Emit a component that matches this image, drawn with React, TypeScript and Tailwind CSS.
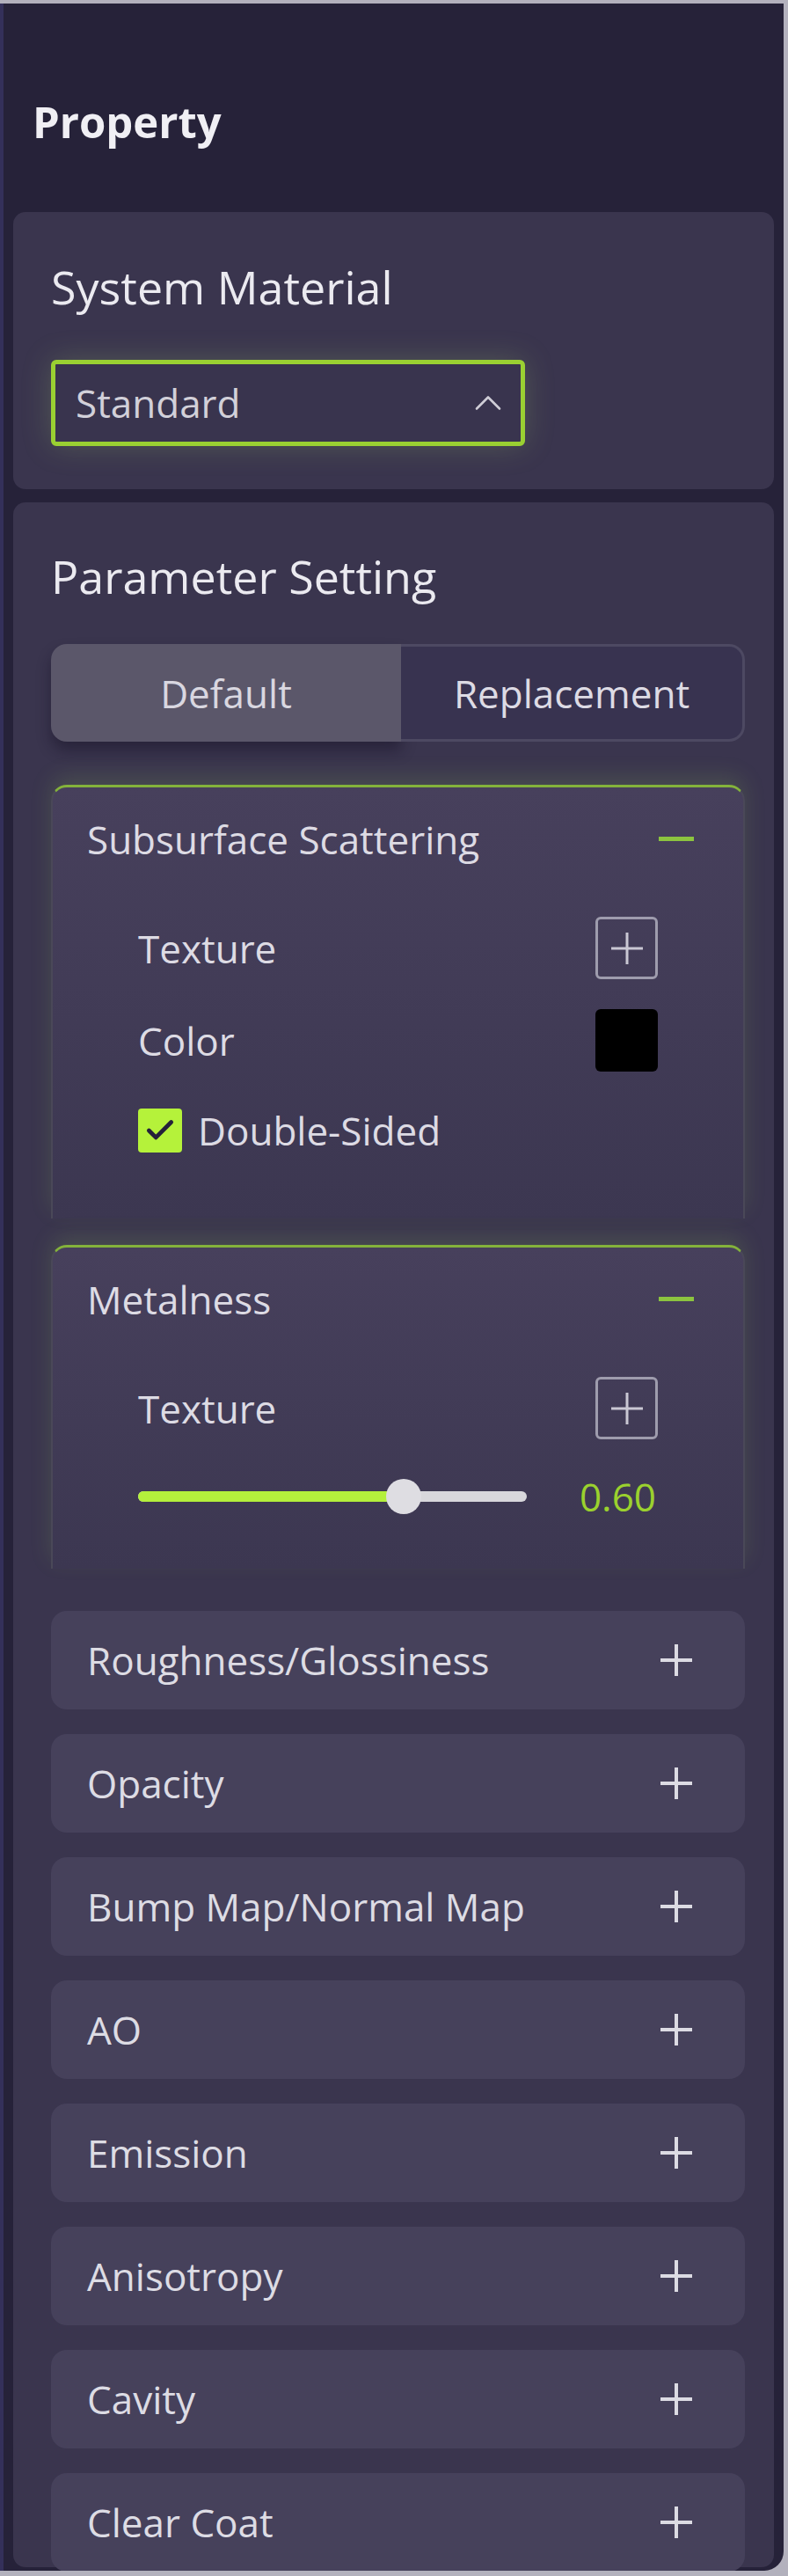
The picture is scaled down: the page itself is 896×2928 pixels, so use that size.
import { ChevronUp } from 'lucide-react';

const collapsed = [
  'Roughness/Glossiness',
  'Opacity',
  'Bump Map/Normal Map',
  'AO',
  'Emission',
  'Anisotropy',
  'Cavity',
  'Clear Coat',
];

function PlusLines({ className = '' }: { className?: string }) {
  return (
    <svg viewBox="0 0 40 40" className={className} fill="none" stroke="currentColor" strokeWidth={4}>
      <path d="M20 2v36M2 20h36" />
    </svg>
  );
}

function TextureButton() {
  return (
    <div className="w-[71px] h-[71px] rounded-[6px] border-[3px] border-[#9e9cad] flex items-center justify-center text-[#c9c7d3]">
      <svg viewBox="0 0 40 40" className="w-[40px] h-[40px]" fill="none" stroke="currentColor" strokeWidth={3}>
        <path d="M20 2v36M2 20h36" />
      </svg>
    </div>
  );
}

function Minus() {
  return <div className="w-[40px] h-[5px] bg-[#8cc43f]" />;
}

function OpenPanel({ title, children, className = '' }: { title: string; children: React.ReactNode; className?: string }) {
  return (
    <div className={`rounded-t-[18px] border-t-[3px] border-x-2 border-t-[#84b33b] border-x-[#4a4858] bg-gradient-to-b from-[#47405c] to-[#3c3751] shadow-[0_-10px_24px_rgba(150,200,90,0.16)] ${className}`}>
      <div className="h-[117px] flex items-center justify-between pl-[39px] pr-[56px]">
        <span className="text-[44px] text-[#dddbe4]">{title}</span>
        <Minus />
      </div>
      {children}
    </div>
  );
}

export default function App() {
  return (
    <div className="min-h-screen bg-[#b3b1bd] pt-[4px] font-['Open_Sans',sans-serif]">
      <div className="w-[891px] h-[2918px] bg-[#262239] rounded-br-[22px] border-l-[4px] border-[#34305a] overflow-hidden px-[11px]">
        <div className="pt-[106px] h-[237px]">
          <h1 className="text-[49px] leading-[56px] font-bold text-[#f0eff4] pl-[22px]">Property</h1>
        </div>

        {/* System material */}
        <section className="h-[315px] rounded-[14px] bg-[#3a354e] pl-[43px] pt-[55px]">
          <h2 className="text-[52px] leading-[60px] text-[#ebeaf0]">System Material</h2>
          <div className="mt-[53px] w-[539px] h-[98px] rounded-[6px] border-[5px] border-[#9ad032] bg-[#39344e] shadow-[0_0_34px_rgba(170,210,110,0.22)] flex items-center justify-between pl-[23px] pr-[11px]">
            <span className="text-[44px] text-[#d2d0d9]">Standard</span>
            <ChevronUp className="w-[52px] h-[52px] text-[#cfcdd6]" strokeWidth={1.2} />
          </div>
        </section>

        {/* Parameter setting */}
        <section className="mt-[15px] h-[2347px] rounded-[14px] bg-[#3a354e] pl-[43px] pr-[33px] pt-[54px]">
          <h2 className="text-[52px] leading-[60px] text-[#ebeaf0]">Parameter Setting</h2>

          <div className="mt-[47px] flex h-[111px]">
            <div className="w-[398px] rounded-l-[18px] bg-[#5b576a] shadow-[0_10px_16px_rgba(20,16,35,0.45)] flex items-center justify-center">
              <span className="text-[44px] text-[#d9d7e0]">Default</span>
            </div>
            <div className="flex-1 rounded-r-[18px] border-[3px] border-l-0 border-[#4d4962] bg-[#383350] flex items-center justify-center">
              <span className="text-[44px] text-[#dddbe4]">Replacement</span>
            </div>
          </div>

          <OpenPanel title="Subsurface Scattering" className="mt-[49px] h-[493px]">
            <div className="mt-[13px] pl-[97px] pr-[97px]">
              <div className="h-[105px] flex items-center justify-between">
                <span className="text-[44px] text-[#dddbe4]">Texture</span>
                <TextureButton />
              </div>
              <div className="h-[105px] flex items-center justify-between">
                <span className="text-[44px] text-[#dddbe4]">Color</span>
                <div className="w-[71px] h-[71px] rounded-[6px] bg-black" />
              </div>
              <div className="h-[100px] flex items-center gap-[18px]">
                <div className="w-[50px] h-[50px] rounded-[4px] bg-[#b5f23a] flex items-center justify-center">
                  <svg viewBox="0 0 24 24" className="w-[38px] h-[38px]" fill="none" stroke="#25213a" strokeWidth={3} strokeLinecap="round" strokeLinejoin="round">
                    <path d="M4 12l5 5L20 6" />
                  </svg>
                </div>
                <span className="text-[44px] text-[#dddbe4]">Double-Sided</span>
              </div>
            </div>
          </OpenPanel>

          <OpenPanel title="Metalness" className="mt-[30px] h-[368px]">
            <div className="mt-[13px] pl-[97px] pr-[97px]">
              <div className="h-[105px] flex items-center justify-between">
                <span className="text-[44px] text-[#dddbe4]">Texture</span>
                <TextureButton />
              </div>
              <div className="h-[95px] flex items-center justify-between pr-[2px]">
                <div className="relative w-[442px] h-[12px] rounded-full bg-[#d8d7dc]">
                  <div className="h-full w-[301px] rounded-full bg-[#b4f03c]" />
                  <div className="absolute left-[282px] top-[-14px] w-[40px] h-[40px] rounded-full bg-[#dedde2]" />
                </div>
                <span className="text-[44px] text-[#9bd12e]">0.60</span>
              </div>
            </div>
          </OpenPanel>

          <div className="mt-[48px] flex flex-col gap-[28px]">
            {collapsed.map((name) => (
              <div key={name} className="h-[112px] shrink-0 rounded-[18px] bg-[#46415b] flex items-center justify-between pl-[41px] pr-[58px]">
                <span className="text-[44px] text-[#dddce4]">{name}</span>
                <PlusLines className="w-[40px] h-[40px] text-[#dcdbe3]" />
              </div>
            ))}
          </div>
        </section>
      </div>
    </div>
  );
}
